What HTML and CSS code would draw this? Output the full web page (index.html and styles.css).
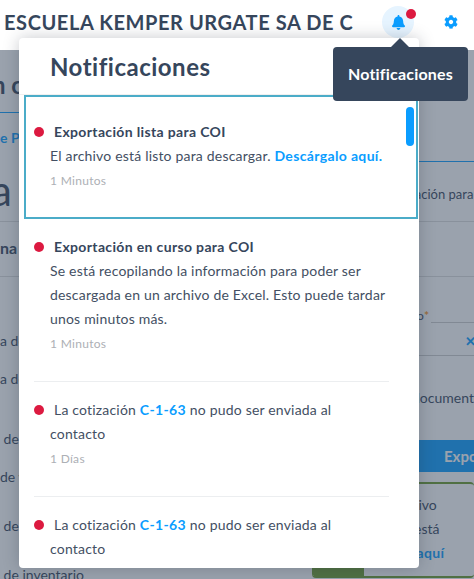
FILE: index.html
```html
<!DOCTYPE html>
<html lang="es">
<head>
  <meta charset="UTF-8" />
  <meta name="viewport" content="width=device-width, initial-scale=1.0" />
  <title>Notificaciones</title>
  <link rel="stylesheet" href="styles.css">
</head>
<body>
  <header class="topbar">
    <h1 class="company">ESCUELA KEMPER URGATE SA DE C</h1>
    <div class="bell">
      <svg class="bell-icon" viewBox="0 0 448 512"><path d="M224 512c35.32 0 63.97-28.65 63.97-64H160.03c0 35.35 28.65 64 63.97 64zm215.39-149.71c-19.32-20.76-55.47-51.99-55.47-154.29 0-77.7-54.48-139.9-127.94-155.16V32c0-17.67-14.32-32-31.98-32s-31.98 14.33-31.98 32v20.84C118.56 68.1 64.08 130.3 64.08 208c0 102.3-36.15 133.53-55.47 154.29-6 6.45-8.66 14.16-8.61 21.71.11 16.4 12.98 32 32.1 32h383.8c19.12 0 32-15.6 32.1-32 .05-7.55-2.61-15.27-8.61-21.71z"/></svg>
      <span class="bell-badge"></span>
    </div>
    <svg class="gear-icon" viewBox="0 0 512 512"><path d="M487.4 315.7l-42.6-24.6c4.3-23.2 4.3-47 0-70.2l42.6-24.6c4.9-2.8 7.1-8.6 5.5-14-11.1-35.6-30-67.8-54.7-94.6-3.8-4.1-10-5.1-14.8-2.3L380.8 110c-17.9-15.4-38.5-27.3-60.8-35.1V25.8c0-5.6-3.9-10.5-9.4-11.7-36.7-8.2-74.3-7.8-109.2 0-5.5 1.2-9.4 6.1-9.4 11.7V75c-22.2 7.9-42.8 19.8-60.8 35.1L88.7 85.5c-4.9-2.8-11-1.9-14.8 2.3-24.7 26.7-43.6 58.9-54.7 94.6-1.7 5.4.6 11.2 5.5 14L67.3 221c-4.3 23.2-4.3 47 0 70.2l-42.6 24.6c-4.9 2.8-7.1 8.6-5.5 14 11.1 35.6 30 67.8 54.7 94.6 3.8 4.1 10 5.1 14.8 2.3l42.6-24.6c17.9 15.4 38.5 27.3 60.8 35.1v49.2c0 5.6 3.9 10.5 9.4 11.7 36.7 8.2 74.3 7.8 109.2 0 5.5-1.2 9.4-6.1 9.4-11.7v-49.2c22.2-7.9 42.8-19.8 60.8-35.1l42.6 24.6c4.9 2.8 11 1.9 14.8-2.3 24.7-26.7 43.6-58.9 54.7-94.6 1.5-5.5-.7-11.3-5.6-14.1zM256 336c-44.1 0-80-35.9-80-80s35.9-80 80-80 80 35.9 80 80-35.9 80-80 80z"/></svg>
  </header>

  <main class="page">
    <div class="page-left">
      <div class="page-title">n cotización</div>
      <div class="page-link">e Productos</div>
      <div class="page-big">a</div>
      <div class="page-sub">na</div>
      <div class="page-line first">a de</div>
      <div class="page-line">a de</div>
      <div class="page-line gap">&nbsp;de</div>
      <div class="page-line">de v</div>
      <div class="page-line gap-sm">&nbsp;de</div>
      <div class="page-line gap-sm">&nbsp;de inventario</div>
    </div>
    <div class="page-right">
      <div class="tab-row"></div>
      <div class="info-row">Información para</div>
      <div class="empty-row"></div>
      <div class="field-row">
        <span class="field-label">Documento<span class="req">*</span></span>
        <span class="field-input"></span>
      </div>
      <div class="select-row"><span class="select-x">&#10005;</span></div>
      <div class="doc-row">documento</div>
      <div class="export-btn">Exportar</div>
      <div class="alert">
        <div class="alert-side"></div>
        <div class="alert-body">
          <div class="alert-line-a">Último archivo</div>
          <div class="alert-line-b">El archivo está</div>
          <div class="alert-link">Descárgalo aquí</div>
        </div>
      </div>
    </div>
    <div class="backdrop"></div>
  </main>

  <section class="popover">
    <h2 class="popover-title">Notificaciones</h2>
    <div class="list">
      <article class="item selected">
        <div class="item-inner">
          <p class="item-text"><span class="dot"></span><strong>Exportación lista para COI</strong><br>El archivo está listo para descargar. <a class="link">Descárgalo aquí.</a></p>
          <p class="item-time">1 Minutos</p>
        </div>
      </article>
      <article class="item">
        <div class="item-inner">
          <p class="item-text"><span class="dot"></span><strong>Exportación en curso para COI</strong><br>Se está recopilando la información para poder ser descargada en un archivo de Excel. Esto puede tardar unos minutos más.</p>
          <p class="item-time">1 Minutos</p>
        </div>
      </article>
      <article class="item">
        <div class="item-inner">
          <p class="item-text"><span class="dot"></span>La cotización <a class="link">C-1-63</a> no pudo ser enviada al contacto</p>
          <p class="item-time">1 Días</p>
        </div>
      </article>
      <article class="item">
        <div class="item-inner">
          <p class="item-text"><span class="dot"></span>La cotización <a class="link">C-1-63</a> no pudo ser enviada al contacto</p>
          <p class="item-time">1 Días</p>
        </div>
      </article>
    </div>
    <div class="scroll-thumb"></div>
  </section>

  <div class="tooltip">Notificaciones</div>
</body>
</html>
```

FILE: styles.css
```css
:root {
  font-family: "Lato", "Open Sans", sans-serif;
  --ink: #36465c;
  --text: #434f63;
  --blue: #0a9dff;
  --red: #dc1a40;
  --teal: #4bacc8;
}
* {
  box-sizing: border-box;
}
body {
  margin: 0;
  width: 474px;
  height: 579px;
  overflow: hidden;
  position: relative;
  background: #fff;
  color: var(--ink);
}

/* === Top bar === */
.topbar {
  height: 50px;
  display: flex;
  align-items: flex-start;
  padding: 6px 0 0 4px;
  background: #fff;
}
.company {
  margin: 0;
  width: 378px;
  font-size: 20px;
  line-height: 32px;
  font-weight: 700;
  letter-spacing: 0.58px;
  white-space: nowrap;
}
.bell {
  position: relative;
  width: 32px;
  height: 32px;
  border-radius: 50%;
  background: #e6f4ff;
  display: flex;
  align-items: center;
  justify-content: center;
}
.bell-icon {
  width: 13px;
  height: 15px;
  fill: var(--blue);
}
.bell-badge {
  position: absolute;
  top: 3px;
  right: -2px;
  width: 10px;
  height: 10px;
  border-radius: 50%;
  background: var(--red);
}
.gear-icon {
  width: 14px;
  height: 14px;
  margin: 9px 0 0 30px;
  fill: var(--blue);
}

/* === Page behind the backdrop === */
.page {
  position: relative;
  height: 529px;
  display: grid;
  grid-template-columns: 312px 162px;
  overflow: hidden;
  font-size: 14px;
}
.backdrop {
  position: absolute;
  inset: 0;
  background: rgba(54, 70, 92, 0.5);
}
.page-title {
  height: 63px;
  padding-top: 20px;
  font-size: 24px;
  line-height: 30px;
  font-weight: 700;
  text-indent: -8px;
  border-bottom: 1px solid var(--blue);
}
.page-link {
  height: 50px;
  line-height: 50px;
  font-weight: 700;
  color: var(--blue);
}
.page-big {
  height: 59px;
  margin-left: -9px;
  font-size: 42px;
  line-height: 54px;
  border-bottom: 1px solid #ddd;
}
.page-sub {
  height: 55px;
  line-height: 52px;
  font-size: 16px;
  font-weight: 700;
  border-bottom: 1px solid #ddd;
}
.page-line {
  height: 38px;
  line-height: 38px;
  white-space: nowrap;
}
.page-line.first {
  margin-top: 45px;
}
.page-line.gap {
  margin-top: 22px;
}
.page-line.gap-sm {
  margin-top: 11px;
}
.tab-row {
  height: 112px;
  border-bottom: 1px solid var(--blue);
}
.info-row {
  height: 60px;
  padding: 20px 0 0 65px;
  font-size: 13px;
  line-height: 24px;
  white-space: nowrap;
  border-bottom: 1px solid #ddd;
}
.empty-row {
  height: 55px;
  border-bottom: 1px solid #ddd;
}
.field-row {
  height: 46px;
  padding-top: 31px;
  display: flex;
  justify-content: flex-end;
  align-items: flex-end;
  font-size: 12px;
  line-height: 14px;
}
.req {
  color: #f7941d;
  font-weight: 700;
}
.field-input {
  width: 43px;
  margin-left: 2px;
  border-bottom: 1px solid #ccc;
}
.select-row {
  height: 33px;
  display: flex;
  justify-content: flex-end;
  align-items: center;
  padding-top: 3px;
  border-bottom: 1px solid #ccc;
}
.select-x {
  width: 9px;
  overflow: hidden;
  color: var(--blue);
  font-size: 13px;
  font-weight: 700;
  line-height: 16px;
}
.doc-row {
  height: 84px;
  padding-top: 30px;
  padding-left: 100px;
  line-height: 24px;
  white-space: nowrap;
}
.export-btn {
  height: 32px;
  margin-left: 18px;
  padding-left: 114px;
  background: var(--blue);
  color: #fff;
  font-size: 15px;
  font-weight: 700;
  line-height: 32px;
  white-space: nowrap;
  overflow: hidden;
}
.alert {
  height: 96px;
  margin-top: 10px;
  display: flex;
  border-radius: 4px;
  background: #fff;
  border: solid #6a9a2a;
  border-width: 2px 0;
  overflow: hidden;
}
.alert-side {
  width: 52px;
  background: #6a9a2a;
}
.alert-body {
  flex: 1;
  padding: 9px 0 0 0;
  line-height: 24px;
  white-space: nowrap;
}
.alert-line-a {
  margin-left: -17px;
}
.alert-line-b {
  margin-left: -13px;
}
.alert-link {
  margin-left: -24px;
  color: var(--blue);
  font-weight: 700;
  letter-spacing: 0.35px;
}

/* === Notifications popover === */
.popover {
  position: absolute;
  left: 19px;
  top: 38px;
  width: 400px;
  height: 530px;
  background: #fff;
  border-radius: 4px;
  box-shadow: 0 0 16px rgba(30, 40, 55, 0.25);
  overflow: hidden;
}
.popover-title {
  margin: 0;
  height: 57px;
  padding: 14px 0 0 31px;
  font-size: 24px;
  line-height: 30px;
  font-weight: 700;
  letter-spacing: 0.5px;
  border-bottom: 1px solid #f0f0f0;
}
.list {
  padding-left: 5px;
}
.item {
  width: 394px;
  padding: 16px 29px 0 10px;
  font-size: 14px;
  line-height: 24px;
  letter-spacing: 0.19px;
  color: var(--text);
}
.item.selected {
  padding: 23px 27px 0 8px;
  border: 2px solid var(--teal);
}
.item-inner {
  padding-bottom: 25px;
  border-bottom: 1px solid #eceef0;
}
.item.selected .item-inner {
  padding-bottom: 24px;
  border-bottom: none;
}
.item-text {
  margin: 0;
  padding-left: 16px;
}
.item-text strong {
  font-weight: 700;
  letter-spacing: 0.35px;
  color: var(--ink);
}
.item-time {
  margin: 1px 0 0 16px;
  font-size: 12px;
  letter-spacing: 0.3px;
  color: #adb0b5;
}
.dot {
  display: inline-block;
  width: 10px;
  height: 10px;
  margin: 0 10px 0 -16px;
  border-radius: 50%;
  background: var(--red);
}
.link {
  color: var(--blue);
  font-weight: 700;
  letter-spacing: 0.35px;
}
.scroll-thumb {
  position: absolute;
  top: 69px;
  left: 387px;
  width: 8px;
  height: 39px;
  border-radius: 4px;
  background: var(--blue);
}

/* === Tooltip === */
.tooltip {
  position: absolute;
  left: 333px;
  top: 47px;
  width: 135px;
  height: 54px;
  border-radius: 4px;
  background: var(--ink);
  color: #fff;
  font-size: 16px;
  font-weight: 700;
  line-height: 54px;
  letter-spacing: 0.2px;
  text-align: center;
}
.tooltip::before {
  content: "";
  position: absolute;
  left: 57px;
  top: -9px;
  border: solid transparent;
  border-width: 0 10px 10px;
  border-bottom-color: var(--ink);
}
```
